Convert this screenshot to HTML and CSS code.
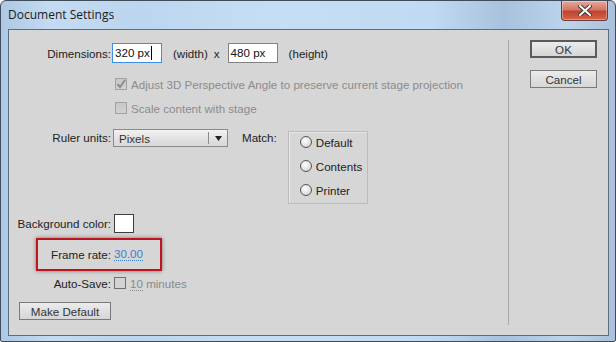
FILE: index.html
```html
<!DOCTYPE html>
<html>
<head>
    <link rel="stylesheet" href="styles.css">
</head>
<body>
    <div class="window">
        <div class="titlebar">
            <span class="title">Document Settings</span>
            <div class="close">
                <svg width="14" height="11" viewBox="0 0 14 11">
                    <path d="M2 1 L12 10 M12 1 L2 10" stroke="#3b3b3b" stroke-width="4" stroke-linecap="square"/>
                    <path d="M2 1 L12 10 M12 1 L2 10" stroke="#ffffff" stroke-width="2" stroke-linecap="square"/>
                </svg>
            </div>
        </div>
        <div class="client">
            <div class="main">
                <div class="row dims">
                    <span class="lbl">Dimensions:</span>
                    <span class="field focused">320 px<span class="caret"></span></span>
                    <span class="unit">(width)</span>
                    <span class="times">x</span>
                    <span class="field second">480 px</span>
                    <span class="unit">(height)</span>
                </div>
                <div class="row check disabled first-check">
                    <span class="box checked">
                        <svg width="10" height="10" viewBox="0 0 10 10"><path d="M1.5 5 L4 8 L9 1" fill="none" stroke="#8d8d8d" stroke-width="2"/></svg>
                    </span>
                    <span>Adjust 3D Perspective Angle to preserve current stage projection</span>
                </div>
                <div class="row check disabled second-check">
                    <span class="box"></span>
                    <span>Scale content with stage</span>
                </div>
                <div class="row ruler">
                    <span class="lbl">Ruler units:</span>
                    <div class="select">
                        <span class="select-text">Pixels</span>
                        <span class="select-arrow">
                            <svg width="7" height="5" viewBox="0 0 7 5"><path d="M0 0 H7 L3.5 5 Z" fill="#222"/></svg>
                        </span>
                    </div>
                    <span class="match">Match:</span>
                    <div class="group">
                        <div class="radio"><span class="dot"></span>Default</div>
                        <div class="radio"><span class="dot"></span>Contents</div>
                        <div class="radio"><span class="dot"></span>Printer</div>
                    </div>
                </div>
                <div class="row bg">
                    <span class="lbl">Background color:</span>
                    <span class="swatch"></span>
                </div>
                <div class="row fps">
                    <span class="lbl">Frame rate:</span>
                    <span class="value">30.00</span>
                </div>
                <div class="row autosave">
                    <span class="lbl">Auto-Save:</span>
                    <span class="box plain"></span>
                    <span class="minutes"><span class="num">10</span> minutes</span>
                </div>
                <div class="row make">
                    <button class="btn make-default">Make Default</button>
                </div>
                <div class="highlight"></div>
            </div>
            <div class="side">
                <button class="btn ok">OK</button>
                <button class="btn cancel">Cancel</button>
            </div>
        </div>
    </div>
</body>
</html>
```

FILE: styles.css
```css
body{
    margin: 0;
    background-color: #ffffff;
}

.window{
    width: 614px;
    height: 340px;
    border: 1px solid #3f4d5b;
    border-radius: 6px 6px 2px 2px;
    background: linear-gradient(90deg, #adc8e4 0%, #c3dbf2 8%, #bcd6ef 22%, #c6def5 45%, #c0daf3 70%, #a8c2dd 82%, #bcd4ec 92%, #a9c1da 100%);
    display: flex;
    flex-direction: column;
    font-family: "Liberation Sans", Arial, sans-serif;
    font-size: 11.6px;
    color: #222;
}

.titlebar{
    height: 28px;
    padding-left: 7px;
    padding-right: 7px;
    display: flex;
    justify-content: space-between;
    align-items: flex-start;
}

.title{
    font-family: "Open Sans", sans-serif;
    font-size: 12px;
    line-height: 28px;
    color: #1b1b1b;
}

.close{
    width: 45px;
    height: 19px;
    border: 1px solid #6b3a36;
    border-top: none;
    border-radius: 0 0 4px 4px;
    background: linear-gradient(180deg, #e6a99c 0%, #d47764 45%, #c0452e 55%, #d5644a 100%);
    display: flex;
    justify-content: center;
    align-items: center;
    box-shadow: inset 0 0 0 1px rgba(255, 255, 255, 0.35);
}

.client{
    flex: 1;
    margin: 0 6px 5px 7px;
    border: 1px solid #5d6d7d;
    background-color: #d6d6d6;
    display: flex;
}

.main{
    width: 499px;
    position: relative;
    padding-top: 13px;
}

.row{
    display: flex;
    align-items: center;
}

.lbl{
    width: 102px;
    text-align: right;
    flex-shrink: 0;
}

/* dimensions */
.dims{
    height: 20px;
}

.field{
    width: 46px;
    height: 18px;
    border: 1px solid #828282;
    background-color: #ffffff;
    padding-left: 2px;
    line-height: 18px;
    color: #111;
    display: flex;
    align-items: center;
}

.field.focused{
    margin-left: 1px;
    border-color: #3d8ee6;
}

.caret{
    width: 1px;
    height: 14px;
    background-color: #000;
    margin-left: 1px;
}

.unit{
    margin-left: 11px;
}

.times{
    margin-left: 6px;
    margin-right: 8px;
}

/* checkboxes */
.check{
    height: 18px;
    padding-left: 106px;
}

.first-check{
    margin-top: 12px;
}

.second-check{
    margin-top: 6px;
}

.disabled{
    color: #8c8c8c;
}

.box{
    width: 10px;
    height: 10px;
    border: 1px solid #a2a2a2;
    background: linear-gradient(180deg, #c8c8c8, #d2d2d2);
    margin-right: 4px;
    display: flex;
    justify-content: center;
    align-items: center;
    flex-shrink: 0;
}

.box.plain{
    margin-left: 3px;
    border-color: #6f6f6f;
    background: #d3d3d3;
}

/* ruler units */
.ruler{
    margin-top: 12px;
    align-items: flex-start;
}

.ruler .lbl{
    line-height: 18px;
}

.select{
    margin-left: 2px;
    width: 113px;
    height: 16px;
    border: 1px solid #8b8b8b;
    background: linear-gradient(180deg, #f2f2f2 0%, #e3e3e3 50%, #d8d8d8 100%);
    display: flex;
    align-items: center;
}

.select-text{
    flex: 1;
    padding-left: 5px;
    color: #333;
}

.select-arrow{
    width: 18px;
    height: 12px;
    border-left: 1px solid #8b8b8b;
    display: flex;
    justify-content: center;
    align-items: center;
}

.match{
    margin-left: 14px;
    line-height: 18px;
}

.group{
    margin-left: 11px;
    margin-top: 2px;
    width: 80px;
    height: 73px;
    border: 1px solid #bcbcbc;
    box-shadow: inset 1px 1px 0 #e6e6e6;
    padding-left: 11px;
    box-sizing: border-box;
    display: flex;
    flex-direction: column;
    gap: 4px;
}

.radio{
    height: 20px;
    display: flex;
    align-items: center;
}

.dot{
    width: 10px;
    height: 10px;
    border: 1px solid #555;
    border-radius: 50%;
    background: radial-gradient(circle at 40% 35%, #ffffff 0%, #e4e4e4 50%, #c8c8c8 100%);
    margin-right: 4px;
}

/* background color */
.bg{
    margin-top: 10px;
    height: 19px;
}

.swatch{
    margin-left: 3px;
    width: 18px;
    height: 17px;
    border: 1px solid #3f3f3f;
    background-color: #ffffff;
}

/* frame rate */
.fps{
    margin-top: 12px;
    height: 18px;
}

.value{
    margin-left: 3px;
    color: #3a80cf;
    border-bottom: 1px dotted #3a80cf;
    line-height: 13px;
}

/* auto save */
.autosave{
    margin-top: 11px;
    height: 18px;
}

.minutes{
    color: #8a8a8a;
}

.num{
    border-bottom: 1px dotted #8a8a8a;
}

.make{
    margin-top: 10px;
    padding-left: 10px;
}

.btn{
    height: 18px;
    border: 1px solid #7a7a7a;
    background: linear-gradient(180deg, #ececec 0%, #e0e0e0 50%, #d6d6d6 100%);
    font-family: "Liberation Sans", Arial, sans-serif;
    font-size: 11.6px;
    color: #333;
    padding: 0;
}

.make-default{
    width: 92px;
}

.highlight{
    position: absolute;
    left: 27px;
    top: 208px;
    width: 122px;
    height: 29px;
    border: 2px solid #c0141c;
    box-shadow: 0 0 4px rgba(0, 0, 0, 0.45);
}

/* side buttons */
.side{
    flex: 1;
    margin-top: 10px;
    margin-bottom: 10px;
    border-left: 1px solid #a9a9a9;
    padding-left: 21px;
    display: flex;
    flex-direction: column;
    align-items: flex-start;
}

.ok{
    width: 67px;
    border: 2px solid #5a5a5a;
}

.cancel{
    width: 67px;
    margin-top: 12px;
}
```
